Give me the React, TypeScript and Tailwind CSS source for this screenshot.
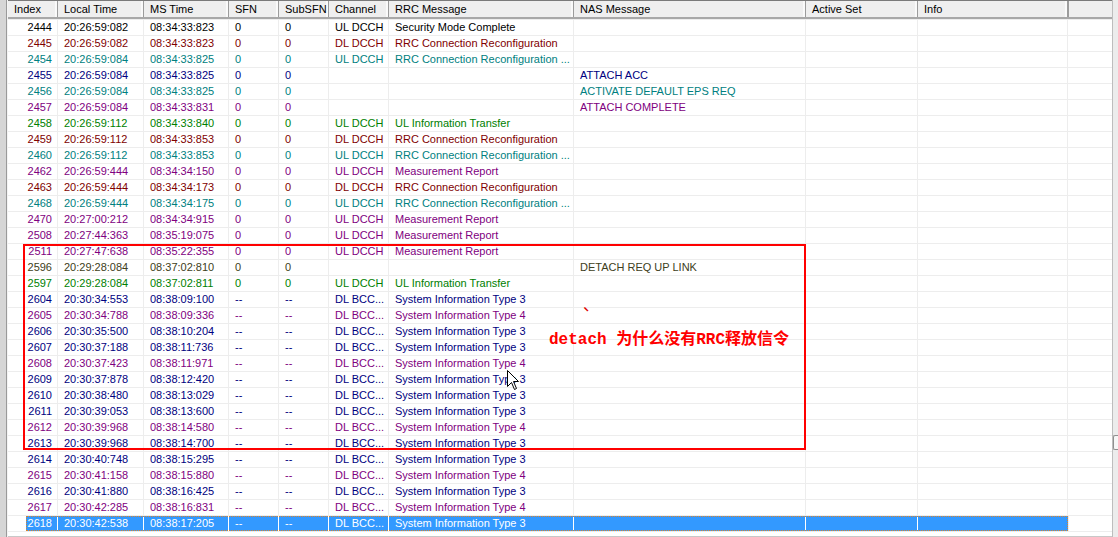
import React from "react";

type Col = { label: string; w: string };

const COLS: Col[] = [
  { label: "Index", w: "w-[50px]" },
  { label: "Local Time", w: "w-[86px]" },
  { label: "MS Time", w: "w-[85px]" },
  { label: "SFN", w: "w-[50px]" },
  { label: "SubSFN", w: "w-[50px]" },
  { label: "Channel", w: "w-[60px]" },
  { label: "RRC Message", w: "w-[185px]" },
  { label: "NAS Message", w: "w-[232px]" },
  { label: "Active Set", w: "w-[112px]" },
  { label: "Info", w: "w-[150px]" },
];

const COLOR: Record<string, string> = {
  k: "text-black",
  r: "text-[#800000]",
  t: "text-[#008080]",
  n: "text-[#000080]",
  p: "text-[#800080]",
  g: "text-[#008000]",
  o: "text-[#404020]",
};

// index, local time, ms time, sfn, subsfn, channel, rrc, nas, color
type Row = [string, string, string, string, string, string, string, string, string];

const RRC_RECONF = "RRC Connection Reconfiguration";
const RRC_RECONF_CUT = "RRC Connection Reconfiguration ...";
const SIB3 = "System Information Type 3";
const SIB4 = "System Information Type 4";

const ROWS: Row[] = [
  ["2444", "20:26:59:082", "08:34:33:823", "0", "0", "UL DCCH", "Security Mode Complete", "", "k"],
  ["2445", "20:26:59:082", "08:34:33:823", "0", "0", "DL DCCH", RRC_RECONF, "", "r"],
  ["2454", "20:26:59:084", "08:34:33:825", "0", "0", "UL DCCH", RRC_RECONF_CUT, "", "t"],
  ["2455", "20:26:59:084", "08:34:33:825", "0", "0", "", "", "ATTACH ACC", "n"],
  ["2456", "20:26:59:084", "08:34:33:825", "0", "0", "", "", "ACTIVATE DEFAULT EPS REQ", "t"],
  ["2457", "20:26:59:084", "08:34:33:831", "0", "0", "", "", "ATTACH COMPLETE", "p"],
  ["2458", "20:26:59:112", "08:34:33:840", "0", "0", "UL DCCH", "UL Information Transfer", "", "g"],
  ["2459", "20:26:59:112", "08:34:33:853", "0", "0", "DL DCCH", RRC_RECONF, "", "r"],
  ["2460", "20:26:59:112", "08:34:33:853", "0", "0", "UL DCCH", RRC_RECONF_CUT, "", "t"],
  ["2462", "20:26:59:444", "08:34:34:150", "0", "0", "UL DCCH", "Measurement Report", "", "p"],
  ["2463", "20:26:59:444", "08:34:34:173", "0", "0", "DL DCCH", RRC_RECONF, "", "r"],
  ["2468", "20:26:59:444", "08:34:34:175", "0", "0", "UL DCCH", RRC_RECONF_CUT, "", "t"],
  ["2470", "20:27:00:212", "08:34:34:915", "0", "0", "UL DCCH", "Measurement Report", "", "p"],
  ["2508", "20:27:44:363", "08:35:19:075", "0", "0", "UL DCCH", "Measurement Report", "", "p"],
  ["2511", "20:27:47:638", "08:35:22:355", "0", "0", "UL DCCH", "Measurement Report", "", "p"],
  ["2596", "20:29:28:084", "08:37:02:810", "0", "0", "", "", "DETACH REQ UP LINK", "o"],
  ["2597", "20:29:28:084", "08:37:02:811", "0", "0", "UL DCCH", "UL Information Transfer", "", "g"],
  ["2604", "20:30:34:553", "08:38:09:100", "--", "--", "DL BCC...", SIB3, "", "n"],
  ["2605", "20:30:34:788", "08:38:09:336", "--", "--", "DL BCC...", SIB4, "", "p"],
  ["2606", "20:30:35:500", "08:38:10:204", "--", "--", "DL BCC...", SIB3, "", "n"],
  ["2607", "20:30:37:188", "08:38:11:736", "--", "--", "DL BCC...", SIB3, "", "n"],
  ["2608", "20:30:37:423", "08:38:11:971", "--", "--", "DL BCC...", SIB4, "", "p"],
  ["2609", "20:30:37:878", "08:38:12:420", "--", "--", "DL BCC...", SIB3, "", "n"],
  ["2610", "20:30:38:480", "08:38:13:029", "--", "--", "DL BCC...", SIB3, "", "n"],
  ["2611", "20:30:39:053", "08:38:13:600", "--", "--", "DL BCC...", SIB3, "", "n"],
  ["2612", "20:30:39:968", "08:38:14:580", "--", "--", "DL BCC...", SIB4, "", "p"],
  ["2613", "20:30:39:968", "08:38:14:700", "--", "--", "DL BCC...", SIB3, "", "n"],
  ["2614", "20:30:40:748", "08:38:15:295", "--", "--", "DL BCC...", SIB3, "", "n"],
  ["2615", "20:30:41:158", "08:38:15:880", "--", "--", "DL BCC...", SIB4, "", "p"],
  ["2616", "20:30:41:880", "08:38:16:425", "--", "--", "DL BCC...", SIB3, "", "n"],
  ["2617", "20:30:42:285", "08:38:16:831", "--", "--", "DL BCC...", SIB4, "", "p"],
];

const SELECTED: Row = ["2618", "20:30:42:538", "08:38:17:205", "--", "--", "DL BCC...", SIB3, "", "k"];

const LogRow = ({ row }: { row: Row }) => {
  const color = COLOR[row[8]];
  return (
    <div className={`flex h-[16px] border-t border-[#ededed] ${color}`}>
      <div className="w-[50px] shrink-0 border-r border-[#ededed] pr-[5px] text-right">{row[0]}</div>
      {COLS.slice(1).map((c, i) => (
        <div
          key={c.label}
          className={`${c.w} shrink-0 overflow-hidden whitespace-nowrap border-r border-[#ededed] pl-[6px]`}
        >
          {i < 7 ? row[i + 1] : ""}
        </div>
      ))}
      <div className="w-[44px] shrink-0" />
    </div>
  );
};

const SelectedRow = ({ row }: { row: Row }) => (
  <div className="flex h-[16px] border-t border-[#ededed] text-white">
    <div className="w-[18px] shrink-0" />
    <div className="flex bg-[#3399ff] outline-1 outline-dotted -outline-offset-1 outline-[#d9822b]">
      <div className="w-[32px] shrink-0 border-r border-white pr-[5px] text-right">{row[0]}</div>
      {COLS.slice(1).map((c, i) => (
        <div
          key={c.label}
          className={`${c.w} shrink-0 overflow-hidden whitespace-nowrap border-r border-white pl-[6px] last:border-r-0`}
        >
          {i < 7 ? row[i + 1] : ""}
        </div>
      ))}
    </div>
    <div className="w-[44px] shrink-0 border-l border-[#ededed]" />
  </div>
);

export default function App() {
  return (
    <div className="relative flex h-[537px] w-[1118px] overflow-hidden bg-white font-['Liberation_Sans',Arial,sans-serif] text-[11px] leading-[15px]">
      {/* left frame */}
      <div className="flex w-[8px] shrink-0">
        <div className="w-[6px] bg-[#d6d6d6]" />
        <div className="w-[1px] bg-[#9a9a9a]" />
        <div className="w-[1px] bg-[#f4f4f4]" />
      </div>

      {/* list */}
      <div className="flex w-[1104px] shrink-0 flex-col">
        <div className="flex h-[19px] shrink-0 border-t border-b-2 border-t-[#7a7a7a] border-b-[#a8a8a8] bg-[#efefef] text-black">
          {COLS.map((c) => (
            <div
              key={c.label}
              className={`${c.w} shrink-0 border-r border-[#9c9c9c] pl-[6px] leading-[16px] shadow-[inset_-2px_0_0_#fafafa]`}
            >
              {c.label}
            </div>
          ))}
          <div className="w-[44px] shrink-0 border-l border-[#9c9c9c]" />
        </div>

        {ROWS.map((r) => (
          <LogRow key={r[0]} row={r} />
        ))}
        <SelectedRow row={SELECTED} />
        <div className="h-[6px] border-t border-b border-t-[#ededed] border-b-[#c8c8c8]" />
      </div>

      {/* scrollbar edge */}
      <div className="flex w-[6px] shrink-0 flex-col border-l border-[#bdbdbd] bg-[#ececec]">
        <div className="mt-[435px] h-[15px] rounded-l-[2px] border border-r-0 border-[#8f8f8f] bg-[#f6f6f6]" />
      </div>

      {/* annotation box */}
      <div className="absolute left-[23px] top-[244px] h-[206px] w-[783px] border-2 border-[#ff0000]" />
      <div className="absolute left-[583px] top-[295px] font-['Noto_Sans_CJK_SC',sans-serif] text-[16px] leading-[16px] text-[#e00000]">
        、
      </div>
      <div className="absolute left-[549px] top-[331px] whitespace-nowrap font-['Liberation_Mono','Noto_Sans_CJK_SC',monospace] text-[16px] font-bold leading-[18px] text-[#ff0000]">
        detach 为什么没有RRC释放信令
      </div>

      {/* mouse pointer */}
      <svg className="absolute left-[507px] top-[370px]" width="13" height="21" viewBox="0 0 13 21">
        <path d="M0.5 0.5 L0.5 16.5 L4.5 12.5 L7.5 19.5 L9.5 18.5 L6.5 11.5 L11.5 11.5 Z" fill="#ffffff" stroke="#000000" strokeWidth="1" />
      </svg>
    </div>
  );
}
